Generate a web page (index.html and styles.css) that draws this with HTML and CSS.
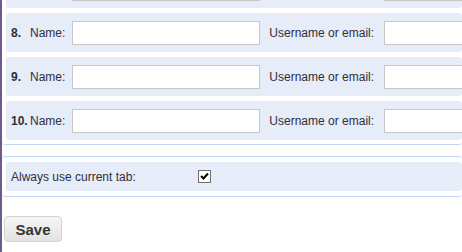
FILE: index.html
```html
<!DOCTYPE html>
<html lang="en">
<head>
    <meta charset="UTF-8">
    <title>Options</title>
    <link rel="stylesheet" href="styles.css">
</head>
<body>
    <div class="page">
        <div class="section accounts">
            <div class="account-row scrolled-past">
                <span class="num">7.</span><span class="label">Name:</span>
                <input type="text" class="name-input">
                <span class="label user-label">Username or email:</span>
                <input type="text" class="user-input">
            </div>
            <div class="account-row">
                <span class="num">8.</span><span class="label">Name:</span>
                <input type="text" class="name-input">
                <span class="label user-label">Username or email:</span>
                <input type="text" class="user-input">
            </div>
            <div class="account-row">
                <span class="num">9.</span><span class="label">Name:</span>
                <input type="text" class="name-input">
                <span class="label user-label">Username or email:</span>
                <input type="text" class="user-input">
            </div>
            <div class="account-row">
                <span class="num">10.</span><span class="label">Name:</span>
                <input type="text" class="name-input">
                <span class="label user-label">Username or email:</span>
                <input type="text" class="user-input">
            </div>
        </div>

        <div class="section options">
            <div class="option-row">
                <span class="option-label">Always use current tab:</span>
                <span class="checkbox">
                    <svg width="11" height="11" viewBox="0 0 11 11">
                        <path d="M2 5 L4.5 7.5 L9 2.5" fill="none" stroke="#000" stroke-width="2"/>
                    </svg>
                </span>
            </div>
        </div>

        <button class="save-btn">Save</button>
    </div>
</body>
</html>
```

FILE: styles.css
```css
body {
    margin: 0;
    height: 252px;
    overflow: hidden;
    font-family: 'Liberation Sans', Arial, sans-serif;
    font-size: 12px;
    color: #2f2f3a;
    background: #fff;
}

.page {
    border-left: 2px solid #6c5b8b;
    height: 252px;
    overflow: hidden;
}

.section {
    border-bottom: 1px solid #c4d6f5;
    border-radius: 3px;
}

.accounts {
    margin-top: -31px;
    padding: 0 0 4px 4px;
}

.account-row {
    display: flex;
    align-items: center;
    height: 39px;
    margin-bottom: 5px;
    padding-left: 5px;
    background: #e6ecf8;
    border-radius: 3px;
    white-space: nowrap;
}

.account-row:last-child {
    margin-bottom: 0;
}

/* row scrolled above the viewport: only the bottom of its inputs shows */
.scrolled-past .num,
.scrolled-past .label {
    visibility: hidden;
}

.num {
    min-width: 16px;
    margin-right: 3px;
    font-weight: bold;
}

.name-input,
.user-input {
    box-sizing: border-box;
    height: 24px;
    margin: 0;
    border: 1px solid #c8c8c8;
    background: #fff;
    flex-shrink: 0;
}

.name-input {
    width: 188px;
    margin-left: 7px;
}

.user-label {
    margin-left: 9px;
}

.user-input {
    width: 188px;
    margin-left: 10px;
}

.options {
    margin-top: 11px;
    border-top: 1px solid #c4d6f5;
    padding: 5px 0 5px 4px;
}

.option-row {
    display: flex;
    align-items: center;
    height: 29px;
    padding-left: 5px;
    background: #e6ecf8;
    border-radius: 3px;
}

.option-label {
    width: 187px;
}

.checkbox {
    box-sizing: border-box;
    width: 13px;
    height: 13px;
    border: 1px solid #6e6e6e;
    background: #fff;
    display: flex;
    align-items: center;
    justify-content: center;
}

.save-btn {
    display: block;
    box-sizing: border-box;
    width: 58px;
    height: 26px;
    margin: 19px 0 0 2px;
    padding: 0;
    font-family: 'Liberation Sans', Arial, sans-serif;
    font-size: 15px;
    font-weight: bold;
    color: #333;
    background: linear-gradient(#f6f6f6, #e2e2e2);
    border: 1px solid #d2d2d2;
    border-radius: 4px;
}
```
